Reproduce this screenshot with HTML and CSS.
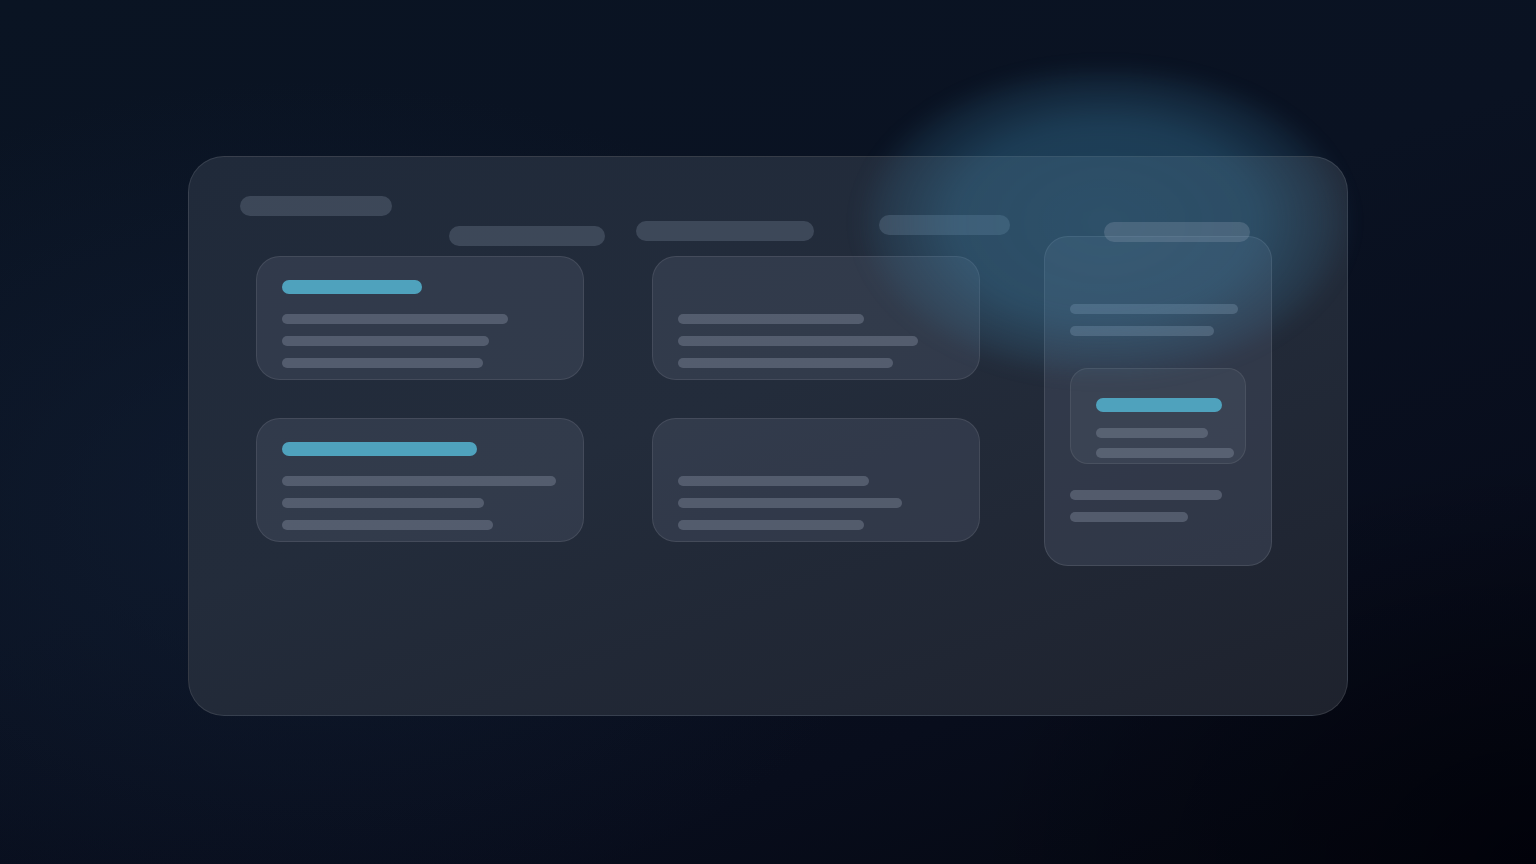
FILE: index.html
```html
<!DOCTYPE html>
<html>
<head>
<meta charset="utf-8">
<link rel="stylesheet" href="styles.css">
</head>
<body>
<div class="stage">
  <div class="panel">
    <div class="left">
      <div class="topbar">
        <div class="pill p1"></div>
        <div class="pill p2"></div>
        <div class="pill p3"></div>
        <div class="pill p4"></div>
      </div>
      <div class="grid">
        <div class="card">
          <div class="bar" style="width:140px"></div>
          <div class="line" style="width:226px"></div>
          <div class="line" style="width:207px"></div>
          <div class="line" style="width:201px"></div>
        </div>
        <div class="card">
          <div class="bar ghost" style="width:140px"></div>
          <div class="line" style="width:186px"></div>
          <div class="line" style="width:240px"></div>
          <div class="line" style="width:215px"></div>
        </div>
        <div class="card">
          <div class="bar" style="width:195px"></div>
          <div class="line" style="width:274px"></div>
          <div class="line" style="width:202px"></div>
          <div class="line" style="width:211px"></div>
        </div>
        <div class="card">
          <div class="bar ghost" style="width:140px"></div>
          <div class="line" style="width:191px"></div>
          <div class="line" style="width:224px"></div>
          <div class="line" style="width:186px"></div>
        </div>
      </div>
    </div>
    <div class="right">
      <div class="pill p5"></div>
      <div class="side">
        <div class="line" style="width:168px"></div>
        <div class="line" style="width:144px"></div>
        <div class="inner">
          <div class="bar small" style="width:126px"></div>
          <div class="line tight" style="width:112px"></div>
          <div class="line tight2" style="width:138px"></div>
        </div>
        <div class="line after" style="width:152px"></div>
        <div class="line" style="width:118px"></div>
      </div>
    </div>
  </div>
  <div class="glow"></div>
</div>
</body>
</html>
```

FILE: styles.css
```css
html, body {
  margin: 0;
  padding: 0;
  width: 1536px;
  height: 864px;
  overflow: hidden;
  font-family: "Liberation Sans", Arial, sans-serif;
}

.stage {
  position: relative;
  width: 1536px;
  height: 864px;
  box-sizing: border-box;
  padding: 156px 0 0 188px;
  background:
    radial-gradient(ellipse 900px 600px at 300px 500px, rgba(20, 34, 56, 0.55), transparent 70%),
    radial-gradient(ellipse 700px 500px at 1536px 864px, rgba(0, 0, 8, 0.7), transparent 80%),
    linear-gradient(160deg, #0a1423 0%, #0a1222 45%, #080d1c 75%, #04070f 100%);
}

.panel {
  width: 1160px;
  height: 560px;
  box-sizing: border-box;
  border-radius: 36px;
  border: 1px solid rgba(255, 255, 255, 0.1);
  background: linear-gradient(160deg, #202a3a 0%, #232c3b 45%, #202633 80%, #1e222d 100%);
  padding: 39px 0 0 51px;
  display: flex;
  align-items: flex-start;
}

.left {
  width: 770px;
  display: flex;
  flex-direction: column;
}

.topbar {
  height: 50px;
  display: flex;
  align-items: flex-start;
}

.pill {
  height: 20px;
  border-radius: 10px;
  background: rgba(125, 138, 158, 0.3);
  flex: none;
}

.p1 { width: 152px; }
.p2 { width: 156px; margin: 30px 0 0 57px; }
.p3 { width: 178px; margin: 25px 0 0 31px; }
.p4 { width: 131px; margin: 19px 0 0 65px; }

.grid {
  margin: 10px 0 0 16px;
  display: grid;
  grid-template-columns: 328px 328px;
  column-gap: 68px;
  row-gap: 38px;
}

.card {
  height: 124px;
  box-sizing: border-box;
  border-radius: 24px;
  border: 1px solid rgba(255, 255, 255, 0.09);
  background: rgba(66, 76, 94, 0.48);
  padding: 23px 0 0 25px;
  display: flex;
  flex-direction: column;
  align-items: flex-start;
}

.bar {
  height: 14px;
  border-radius: 7px;
  background: #4fa2bd;
  margin-bottom: 20px;
}

.bar.ghost { visibility: hidden; }

.line {
  height: 10px;
  border-radius: 5px;
  background: rgba(135, 145, 162, 0.4);
  flex: none;
}

.line + .line { margin-top: 12px; }

.right {
  margin: 26px 0 0 34px;
  width: 228px;
  display: flex;
  flex-direction: column;
}

.p5 {
  width: 146px;
  margin-left: 60px;
  position: relative;
  z-index: 1;
  background: rgba(140, 155, 175, 0.3);
}

.side {
  margin-top: -6px;
  height: 330px;
  box-sizing: border-box;
  border-radius: 24px;
  border: 1px solid rgba(255, 255, 255, 0.1);
  background: rgba(66, 76, 94, 0.48);
  padding: 67px 0 0 25px;
  display: flex;
  flex-direction: column;
  align-items: flex-start;
}

.inner {
  margin-top: 32px;
  width: 176px;
  height: 96px;
  box-sizing: border-box;
  border-radius: 18px;
  border: 1px solid rgba(255, 255, 255, 0.08);
  background: rgba(72, 80, 96, 0.45);
  padding: 29px 0 0 25px;
  display: flex;
  flex-direction: column;
  align-items: flex-start;
}

.bar.small { margin-bottom: 16px; }
.line.tight2 { margin-top: 10px; }
.line.after { margin-top: 26px; }

.glow {
  position: absolute;
  left: 855px;
  top: 62px;
  width: 500px;
  height: 320px;
  border-radius: 50%;
  background: radial-gradient(ellipse closest-side, rgba(62, 136, 176, 0.4) 0%, rgba(62, 136, 176, 0.36) 60%, rgba(62, 136, 176, 0.14) 88%, rgba(62, 136, 176, 0) 100%);
  filter: blur(8px);
  pointer-events: none;
}
```
